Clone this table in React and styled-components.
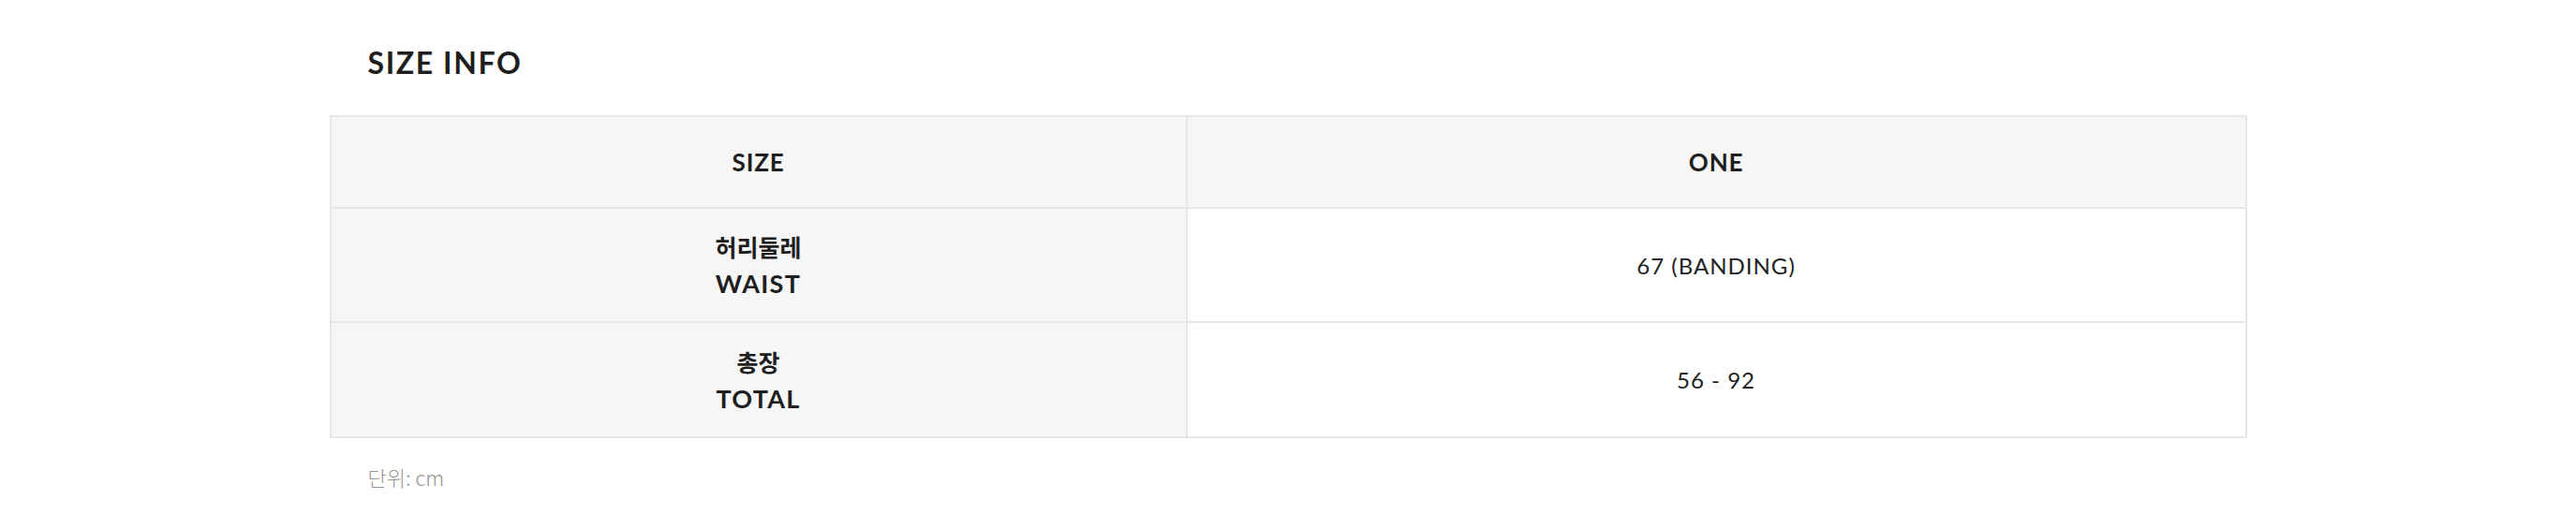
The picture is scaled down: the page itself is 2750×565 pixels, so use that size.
import React from "react";
import styled, { createGlobalStyle } from "styled-components";

const GlobalStyle = createGlobalStyle`
  html, body { margin: 0; padding: 0; background: #ffffff; }
  body { font-family: Lato, "Noto Sans CJK KR", sans-serif; color: #222222; }
`;

const Section = styled.section`
  width: 2047px;
  margin: 0 auto;
  padding-top: 48px;
`;

const Title = styled.h2`
  margin: 0 0 37px;
  padding-left: 41px;
  font-family: Lato, "Noto Sans CJK KR", sans-serif;
  font-weight: 700;
  font-size: 32px;
  line-height: 38px;
  letter-spacing: 1.6px;
  color: #1e1e1e;
`;

const Table = styled.table`
  width: 100%;
  border-collapse: collapse;
  table-layout: fixed;
  border: 2px solid #e6e6e6;
`;

const Col = styled.col`
  width: ${(p) => p.$w};
`;

const HeadCell = styled.th`
  height: 96px;
  padding: 0;
  border: 2px solid #e6e6e6;
  background: #f6f6f6;
  font-family: Lato, "Noto Sans CJK KR", sans-serif;
  font-weight: 700;
  font-size: 26px;
  letter-spacing: 0.8px;
  color: #1e1e1e;
  text-align: center;
  vertical-align: middle;
`;

const LabelCell = styled.th`
  height: ${(p) => p.$h}px;
  padding: 0;
  border: 2px solid #e6e6e6;
  background: #f6f6f6;
  font-weight: 700;
  font-size: 26px;
  line-height: 39px;
  color: #1e1e1e;
  text-align: center;
  vertical-align: middle;
`;

const KoLabel = styled.span`
  display: block;
  font-family: "Noto Sans CJK KR", sans-serif;
  font-weight: 700;
  font-size: 25px;
`;

const EnLabel = styled.span`
  display: block;
  font-family: Lato, sans-serif;
  font-weight: 700;
  font-size: 27px;
  letter-spacing: 1.3px;
`;

const ValueCell = styled.td`
  padding: 0;
  border: 2px solid #e6e6e6;
  background: #ffffff;
  font-family: Lato, "Noto Sans CJK KR", sans-serif;
  font-weight: 400;
  font-size: 24px;
  letter-spacing: 1px;
  color: #222222;
  text-align: center;
  vertical-align: middle;
`;

const Note = styled.p`
  margin: 25px 0 0;
  padding-left: 41px;
  font-family: "Noto Sans CJK KR", sans-serif;
  font-weight: 300;
  font-size: 22px;
  line-height: 33px;
  color: #949494;
`;

const rows = [
  { ko: "허리둘레", en: "WAIST", value: "67 (BANDING)", h: 120 },
  { ko: "총장", en: "TOTAL", value: "56 - 92", h: 121 },
];

export default function App() {
  return (
    <>
      <GlobalStyle />
      <Section>
        <Title>SIZE INFO</Title>
        <Table>
          <colgroup>
            <Col $w="44.7%" />
            <Col $w="55.3%" />
          </colgroup>
          <thead>
            <tr>
              <HeadCell>SIZE</HeadCell>
              <HeadCell>ONE</HeadCell>
            </tr>
          </thead>
          <tbody>
            {rows.map((r) => (
              <tr key={r.en}>
                <LabelCell $h={r.h}>
                  <KoLabel>{r.ko}</KoLabel>
                  <EnLabel>{r.en}</EnLabel>
                </LabelCell>
                <ValueCell>{r.value}</ValueCell>
              </tr>
            ))}
          </tbody>
        </Table>
        <Note>단위: cm</Note>
      </Section>
    </>
  );
}
